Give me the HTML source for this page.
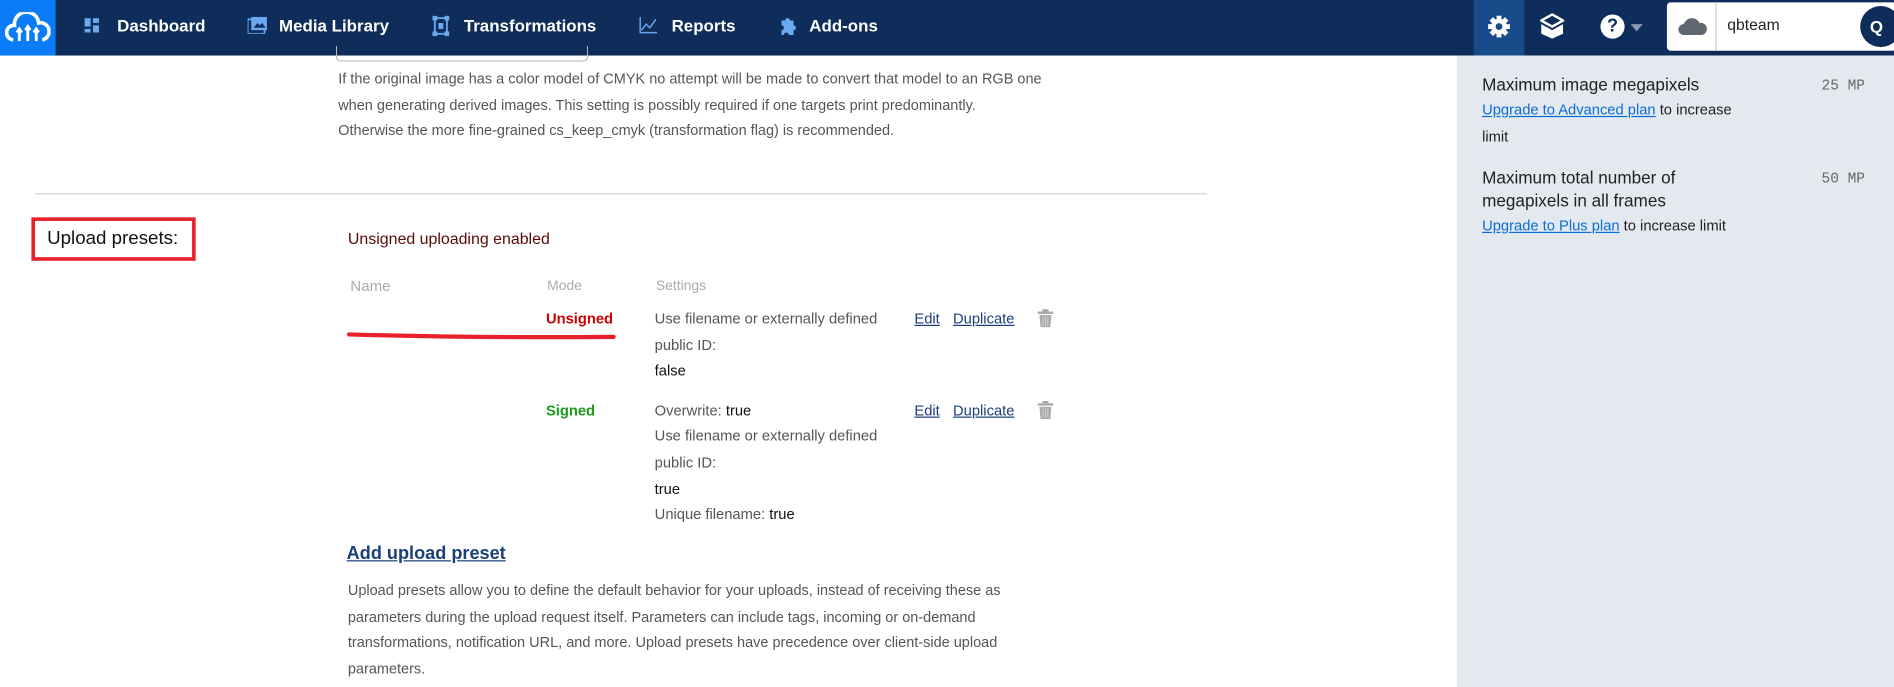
<!DOCTYPE html>
<html><head><meta charset="utf-8"><style>
html,body{margin:0;padding:0;width:1894px;height:687px;overflow:hidden;background:#fff}
#w{position:absolute;left:0;top:0;width:1568px;height:569px;transform:scale(1.2079,1.2074);transform-origin:0 0;font-family:"Liberation Sans",sans-serif}
.a{position:absolute;white-space:nowrap;line-height:20px}
.nav{position:absolute;left:0;top:0;width:1568px;height:46px;background:#0f2d5a}
.ni{position:absolute;top:11px;color:#fff;font-weight:bold;font-size:14px;line-height:20px}
.p{font-size:12px;color:#555;line-height:21.5px}
.s{font-size:12.2px;color:#555}
.s b{color:#111;font-weight:normal}
.lk{color:#1b3f7a;text-decoration:underline;font-size:12.2px}
.sb{position:absolute;left:1206px;top:46px;width:362px;height:523px;background:#e4e9f0}
.h{font-size:14.2px;color:#222}
.mp{font-family:"Liberation Mono",monospace;font-size:12px;color:#666}
.ul{color:#0a6cd8;text-decoration:underline}
</style></head><body><div id="w">
<div class="nav"></div>
<div style="position:absolute;left:0;top:0;width:46px;height:46px;background:#0a7cf8"></div>
<svg style="position:absolute;left:4px;top:10px" width="38" height="26" viewBox="0 0 38 26"><path d="M7 23 A6 6 0 0 1 8 11 A10 10 0 0 1 28 9 A7 7 0 0 1 31 23" fill="none" stroke="#fff" stroke-width="3"/><path d="M12 24V15M10 17l2-3 2 3M19 24V13M17 15l2-3 2 3M26 24V15M24 17l2-3 2 3" stroke="#fff" stroke-width="2.4" fill="#fff"/></svg>
<svg style="position:absolute;left:70px;top:15px" width="12" height="12"><rect x="0" y="0" width="5" height="7" fill="#6aa8ef"/><rect x="7" y="0" width="5" height="4" fill="#6aa8ef"/><rect x="7" y="6" width="5" height="6" fill="#6aa8ef"/><rect x="0" y="9" width="5" height="3" fill="#6aa8ef"/></svg>
<div class="ni" style="left:97px">Dashboard</div>
<svg style="position:absolute;left:205px;top:14px" width="16" height="14"><rect x="0" y="2" width="14" height="12" fill="none" stroke="#6aa8ef" stroke-width="1.5"/><rect x="3" y="0" width="13" height="11" fill="#6aa8ef"/><path d="M5 9l3-4 2 2 2-2 3 4z" fill="#0f2d5a"/></svg>
<div class="ni" style="left:231px">Media Library</div>
<svg style="position:absolute;left:358px;top:13px" width="14" height="17"><rect x="2" y="2" width="10" height="13" fill="none" stroke="#6aa8ef" stroke-width="1.5"/><rect x="0" y="0" width="4" height="4" fill="#6aa8ef"/><rect x="10" y="0" width="4" height="4" fill="#6aa8ef"/><rect x="0" y="13" width="4" height="4" fill="#6aa8ef"/><rect x="10" y="13" width="4" height="4" fill="#6aa8ef"/><rect x="5" y="6" width="4" height="5" fill="#6aa8ef"/></svg>
<div class="ni" style="left:384px">Transformations</div>
<svg style="position:absolute;left:529px;top:14px" width="15" height="14"><path d="M1 0V13H15" fill="none" stroke="#6aa8ef" stroke-width="1.2"/><path d="M2 11l4-5 3 3 5-7" fill="none" stroke="#6aa8ef" stroke-width="1.2"/></svg>
<div class="ni" style="left:556px">Reports</div>
<svg style="position:absolute;left:644px;top:13px" width="15" height="17"><path d="M3 4h3a2 2 0 1 1 4 0h3v4a2 2 0 1 1 0 4v4H9a2 2 0 1 0-4 0H3v-4a2 2 0 1 0 0-4z" fill="#6aa8ef"/></svg>
<div class="ni" style="left:670px">Add-ons</div>
<div style="position:absolute;left:1220px;top:0;width:42px;height:46px;background:#174b8a"></div>
<svg style="position:absolute;left:1231px;top:12px" width="20" height="20" viewBox="0 0 20 20"><g fill="#fff"><circle cx="10" cy="10" r="6.5"/><rect x="8" y="1" width="4" height="18"/><rect x="1" y="8" width="18" height="4"/><rect x="8" y="1" width="4" height="18" transform="rotate(45 10 10)"/><rect x="8" y="1" width="4" height="18" transform="rotate(-45 10 10)"/></g><circle cx="10" cy="10" r="2.8" fill="#174b8a"/></svg>
<svg style="position:absolute;left:1275px;top:11px" width="20" height="22" viewBox="0 0 20 22"><path d="M10 1L19 6 10 11 1 6z" fill="none" stroke="#fff" stroke-width="2"/><path d="M1 9l9 5 9-5v8l-9 4-9-4z" fill="#fff"/></svg>
<div style="position:absolute;left:1325px;top:12px;width:20px;height:20px;border-radius:50%;background:#fff;color:#0f2d5a;font-weight:bold;font-size:15px;line-height:20px;text-align:center">?</div>
<div style="position:absolute;left:1350px;top:20px;width:0;height:0;border-left:5px solid transparent;border-right:5px solid transparent;border-top:6px solid #8a9ab0"></div>
<div style="position:absolute;left:1380px;top:2px;width:190px;height:40px;background:#fff;border-radius:3px"></div>
<svg style="position:absolute;left:1389px;top:14px" width="26" height="16"><path d="M5 15a4.5 4.5 0 0 1 0-9 7 7 0 0 1 13-1 5 5 0 0 1 2 10z" fill="#5f6670"/></svg>
<div style="position:absolute;left:1420px;top:2px;width:1px;height:40px;background:#ccd"></div>
<div class="a" style="left:1430px;top:11px;font-size:13px;color:#222">qbteam</div>
<div style="position:absolute;left:1540px;top:5px;width:34px;height:34px;border-radius:50%;background:#0f2d5a;color:#fff;font-weight:bold;font-size:14px;line-height:34px;text-indent:8px">Q</div>

<div class="sb"></div>
<div class="a h" style="left:1227px;top:61px">Maximum image megapixels</div>
<div class="a mp" style="left:1508px;top:61px">25 MP</div>
<div class="a s" style="left:1227px;top:81px;color:#222"><span class="ul">Upgrade to Advanced plan</span> to increase</div>
<div class="a s" style="left:1227px;top:103px;color:#222">limit</div>
<div class="a h" style="left:1227px;top:138px">Maximum total number of</div>
<div class="a h" style="left:1227px;top:157px">megapixels in all frames</div>
<div class="a mp" style="left:1508px;top:138px">50 MP</div>
<div class="a s" style="left:1227px;top:177px;color:#222"><span class="ul">Upgrade to Plus plan</span> to increase limit</div>

<div style="position:absolute;left:278px;top:38px;width:207px;height:12px;border:1px solid #bbb;border-top:none;border-radius:0 0 4px 4px"></div>
<div class="a p" style="left:280px;top:55px">If the original image has a color model of CMYK no attempt will be made to convert that model to an RGB one<br>when generating derived images. This setting is possibly required if one targets print predominantly.<br>Otherwise the more fine-grained cs_keep_cmyk (transformation flag) is recommended.</div>
<div style="position:absolute;left:29px;top:160px;width:970px;height:1px;background:#d0d4da"></div>
<div style="position:absolute;left:26px;top:180px;width:130px;height:30px;border:3px solid #e8202a"></div>
<div class="a" style="left:39px;top:188px;font-size:15.5px;color:#111">Upload presets:</div>
<div class="a" style="left:288px;top:188px;font-size:13.2px;color:#5a0a0a">Unsigned uploading enabled</div>
<div class="a" style="left:290px;top:227px;font-size:12.5px;color:#aaa">Name</div>
<div class="a" style="left:453px;top:227px;font-size:11.5px;color:#aaa">Mode</div>
<div class="a" style="left:543px;top:227px;font-size:11.5px;color:#aaa">Settings</div>
<div class="a" style="left:452px;top:254px;font-size:12.2px;color:#c00;font-weight:bold">Unsigned</div>
<svg style="position:absolute;left:286px;top:273px" width="226" height="10"><path d="M3 4 Q110 7 222 6" stroke="#e8202a" stroke-width="3.5" fill="none" stroke-linecap="round"/></svg>
<div class="a s" style="left:542px;top:254px">Use filename or externally defined</div>
<div class="a s" style="left:542px;top:276px">public ID:</div>
<div class="a s" style="left:542px;top:297px"><b>false</b></div>
<div class="a lk" style="left:757px;top:254px">Edit</div>
<div class="a lk" style="left:789px;top:254px">Duplicate</div>
<svg style="position:absolute;left:859px;top:256px" width="13" height="15"><rect x="0" y="2" width="13" height="2" fill="#aaa"/><rect x="4" y="0" width="5" height="2" fill="#aaa"/><path d="M1.5 5h10l-1 10h-8z" fill="#aaa"/><path d="M4.5 6v8M6.5 6v8M8.5 6v8" stroke="#ddd" stroke-width=".6"/></svg>
<div class="a" style="left:452px;top:330px;font-size:12.2px;color:#1a9a1a;font-weight:bold">Signed</div>
<div class="a s" style="left:542px;top:330px">Overwrite: <b>true</b></div>
<div class="a s" style="left:542px;top:351px">Use filename or externally defined</div>
<div class="a s" style="left:542px;top:373px">public ID:</div>
<div class="a s" style="left:542px;top:395px"><b>true</b></div>
<div class="a s" style="left:542px;top:416px">Unique filename: <b>true</b></div>
<div class="a lk" style="left:757px;top:330px">Edit</div>
<div class="a lk" style="left:789px;top:330px">Duplicate</div>
<svg style="position:absolute;left:859px;top:332px" width="13" height="15"><rect x="0" y="2" width="13" height="2" fill="#aaa"/><rect x="4" y="0" width="5" height="2" fill="#aaa"/><path d="M1.5 5h10l-1 10h-8z" fill="#aaa"/><path d="M4.5 6v8M6.5 6v8M8.5 6v8" stroke="#ddd" stroke-width=".6"/></svg>
<div class="a" style="left:287px;top:449px;font-size:15px;color:#1b3f7a;text-decoration:underline;font-weight:bold">Add upload preset</div>
<div class="a p" style="left:288px;top:479px">Upload presets allow you to define the default behavior for your uploads, instead of receiving these as<br>parameters during the upload request itself. Parameters can include tags, incoming or on-demand<br>transformations, notification URL, and more. Upload presets have precedence over client-side upload<br>parameters.</div>
</div></body></html>
